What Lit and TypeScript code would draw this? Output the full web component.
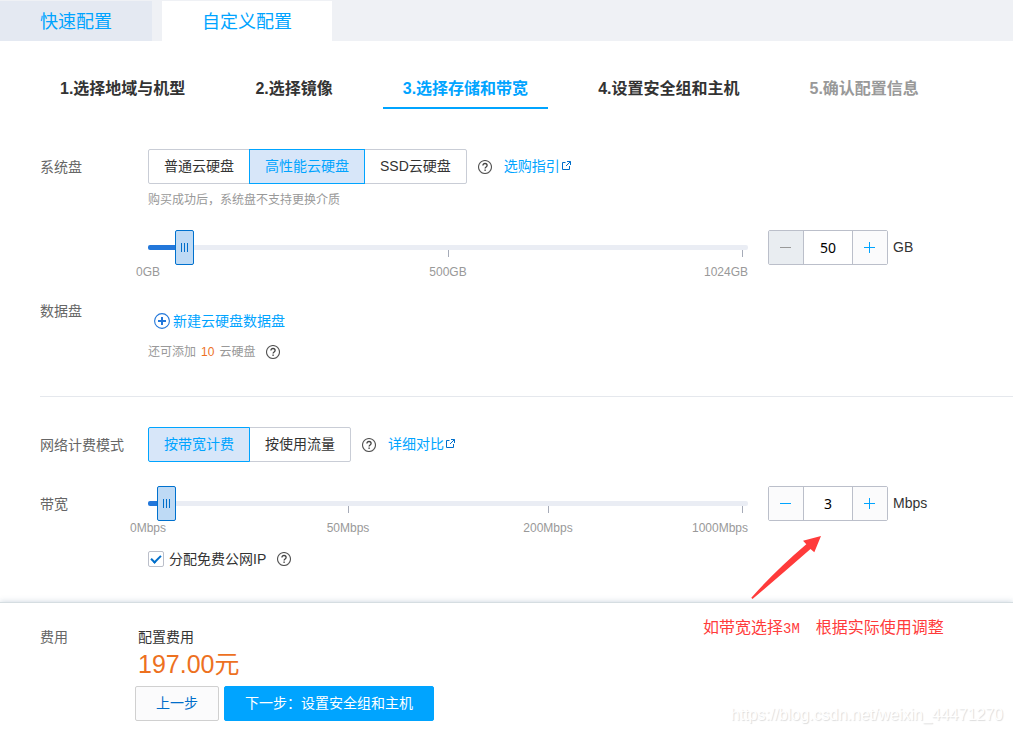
import { LitElement, html, css, svg, nothing } from "lit";
import { customElement, property, state } from "lit/decorators.js";
import { classMap } from "lit/directives/class-map.js";
import { styleMap } from "lit/directives/style-map.js";

const helpIcon = html`<svg class="help" viewBox="0 0 14 14" width="14" height="14" role="img" aria-label="帮助">
  <circle cx="7" cy="7" r="6.5" fill="none" stroke="#555" stroke-width="1.1" />
  <path d="M4.9 5.6C4.9 4.3 5.8 3.5 7 3.5s2.1.8 2.1 1.9c0 1.5-2 1.5-2 3.1" fill="none" stroke="#444" stroke-width="1.3" />
  <rect x="6.4" y="9.5" width="1.4" height="1.4" fill="#444" />
</svg>`;

const externalIcon = html`<svg class="external" viewBox="0 0 9 9" width="9" height="9" aria-hidden="true">
  <path d="M3.5 1.5H.5v7h7V5M5 .5h3.5V4M8.5.5L4 5" fill="none" stroke="#006eca" stroke-width="1" />
</svg>`;

/** Row of mutually exclusive options. */
@customElement("option-group")
export class OptionGroup extends LitElement {
  @property({ attribute: false }) options: string[] = [];
  @property({ type: Number }) selected = 0;
  @property() label = "";

  static styles = css`
    :host { display: inline-flex; }
    .group { display: flex; }
    .option {
      box-sizing: border-box;
      height: 35px;
      padding: 0 15px;
      border: 1px solid #c9cdd6;
      background: #fff;
      color: #333;
      font: inherit;
      line-height: 33px;
      white-space: nowrap;
      cursor: pointer;
    }
    .option + .option { margin-left: -1px; }
    .option:first-child { border-radius: 2px 0 0 2px; }
    .option:last-child { border-radius: 0 2px 2px 0; }
    .active {
      z-index: 1;
      border-color: #00a4ff;
      background: #d7e6f9;
      color: #00a4ff;
    }
  `;

  render() {
    return html`<div class="group" role="group" aria-label=${this.label}>
      ${this.options.map(
        (text, i) => html`<button
          type="button"
          class=${classMap({ option: true, active: i === this.selected })}
          aria-pressed=${i === this.selected}
          @click=${() => (this.selected = i)}
        >${text}</button>`
      )}
    </div>`;
  }
}

/** Slider with scale marks, paired with a minus / value / plus stepper. */
@customElement("amount-slider")
export class AmountSlider extends LitElement {
  @property({ attribute: false }) marks: string[] = [];
  @property({ type: Number }) position = 0;
  @property({ type: Number }) amount = 0;
  @property({ type: Number }) min = 0;
  @property() unit = "";
  @property() label = "";

  static styles = css`
    :host { display: flex; align-items: flex-start; }
    .slider { flex: 0 1 600px; min-width: 0; }
    .range {
      appearance: none;
      display: block;
      width: 100%;
      height: 35px;
      margin: 0;
      background: none;
      cursor: pointer;
    }
    .range::-webkit-slider-runnable-track {
      height: 5px;
      border-radius: 2px;
      background: linear-gradient(to right, #2277da var(--fill), #eaedf4 var(--fill));
    }
    .range::-webkit-slider-thumb {
      appearance: none;
      box-sizing: border-box;
      width: 19px;
      height: 35px;
      margin-top: -15px;
      border: 1px solid #0071ce;
      border-radius: 2px;
      background:
        linear-gradient(#006eca, #006eca) 5px 12px / 1px 9px no-repeat,
        linear-gradient(#006eca, #006eca) 8px 12px / 1px 9px no-repeat,
        linear-gradient(#006eca, #006eca) 11px 12px / 1px 9px no-repeat,
        #bedaf5;
    }
    .marks {
      display: flex;
      justify-content: space-between;
      margin-top: -15px;
      color: #999;
      font-size: 12px;
      line-height: 16px;
    }
    .mark {
      display: flex;
      flex-direction: column;
      align-items: center;
      gap: 7px;
      width: 0;
      white-space: nowrap;
    }
    .tick { width: 1px; height: 7px; background: #a6abb8; }
    .mark:first-child .tick { visibility: hidden; }
    .mark:last-child { align-items: flex-end; }
    .mark:last-child .tick { margin-right: 5px; }
    .stepper {
      display: flex;
      flex: none;
      box-sizing: border-box;
      width: 120px;
      height: 35px;
      margin: 0 5px 0 20px;
      border: 1px solid #bbbfca;
      border-radius: 2px;
    }
    .step {
      display: grid;
      place-items: center;
      box-sizing: border-box;
      width: 34px;
      padding: 0 1px 0 0;
      border: 0;
      background: #fbfbfc;
      color: #00a4ff;
      cursor: pointer;
    }
    .step:disabled { background: #e9edf1; color: #999; }
    .value {
      flex: 1;
      box-sizing: border-box;
      min-width: 0;
      padding: 0;
      border: 1px solid #bbbfca;
      border-width: 0 1px;
      background: #fff;
      color: #000;
      font: 14px "Noto Sans", sans-serif;
      text-align: center;
    }
    .unit { color: #333; line-height: 34px; }
  `;

  private sign(plus: boolean) {
    return html`<svg viewBox="0 0 11 11" width="11" height="11" aria-hidden="true">
      <path d="M0 5.5h11" stroke="currentColor" />
      ${plus ? svg`<path d="M5.5 0v11" stroke="currentColor" />` : nothing}
    </svg>`;
  }

  render() {
    return html`
      <div class="slider">
        <input
          class="range"
          type="range"
          min="0"
          max="581"
          aria-label=${this.label}
          aria-valuetext=${this.amount + this.unit}
          .value=${String(this.position)}
          style=${styleMap({ "--fill": `${(this.position + 9) / 6}%` })}
          @input=${(e: Event) => (this.position = Number((e.target as HTMLInputElement).value))}
        />
        <div class="marks">
          ${this.marks.map((m) => html`<div class="mark"><i class="tick"></i><span>${m}</span></div>`)}
        </div>
      </div>
      <div class="stepper">
        <button class="step" type="button" aria-label="减少" ?disabled=${this.amount <= this.min}
          @click=${() => this.amount--}>${this.sign(false)}</button>
        <input class="value" type="text" aria-label=${this.label} .value=${String(this.amount)} />
        <button class="step" type="button" aria-label="增加"
          @click=${() => this.amount++}>${this.sign(true)}</button>
      </div>
      <span class="unit">${this.unit}</span>
    `;
  }
}

@customElement("app-root")
export class AppRoot extends LitElement {
  @state() private freeIp = true;

  private steps = ["选择地域与机型", "选择镜像", "选择存储和带宽", "设置安全组和主机", "确认配置信息"];

  static styles = css`
    :host {
      display: block;
      position: relative;
      overflow: hidden;
      min-height: 100vh;
      background: #fff;
      color: #333;
      font: 14px/20px "Liberation Sans", "Noto Sans CJK SC", sans-serif;
    }
    .tabs {
      display: flex;
      gap: 10px;
      padding-top: 1px;
      background: #eff1f5;
    }
    .tab {
      height: 40px;
      padding: 2px 40px 0;
      border: 0;
      background: #e4e9f2;
      color: #00a4ff;
      font: inherit;
      font-size: 18px;
      cursor: pointer;
    }
    .tab.current { background: #fff; }
    .steps {
      display: flex;
      gap: 30px;
      margin: 29px 0 40px;
      padding: 0 0 0 40px;
      list-style: none;
      font-size: 16px;
      font-weight: bold;
      line-height: 37px;
      white-space: nowrap;
    }
    .stage { padding: 0 20px; border-bottom: 2px solid transparent; }
    .stage.current { border-color: #00a4ff; color: #00a4ff; }
    .stage.pending { color: #999; }
    .row {
      display: grid;
      grid-template-columns: 108px minmax(0, 1fr);
      padding-left: 40px;
    }
    .name { color: #666; }
    .tall { height: 35px; line-height: 36px; }
    .line { display: flex; align-items: center; }
    .help { display: block; flex: none; margin: 0 12px 0 11px; }
    .link {
      display: flex;
      align-items: center;
      gap: 2px;
      color: #00a4ff;
      line-height: 33px;
      text-decoration: none;
    }
    .external { margin-bottom: 2px; }
    .hint {
      display: flex;
      align-items: center;
      color: #999;
      font-size: 12px;
      line-height: 18px;
    }
    .after-options { margin: 7px 0 21px; }
    .count { margin: 0 5px; color: #ed711f; }
    .data-disk { margin-top: 21px; }
    .add {
      display: flex;
      align-items: center;
      gap: 3px;
      margin: 10px 0 12px;
      padding: 0 6px;
      border: 0;
      background: none;
      color: #00a4ff;
      font: inherit;
      cursor: pointer;
    }
    .divider {
      height: 1px;
      margin: 35px 0 30px 40px;
      border: 0;
      background: #e5e8ed;
    }
    .bandwidth { margin-top: 24px; }
    .ip { height: 16px; margin-top: 15px; }
    .check-label { display: flex; align-items: center; gap: 5px; }
    .check {
      appearance: none;
      box-sizing: border-box;
      width: 16px;
      height: 16px;
      margin: 0;
      border: 1px solid #bbbfca;
      border-radius: 2px;
      background: #fff;
      display: grid;
      place-items: center;
    }
    .check:checked::before {
      content: "";
      width: 8px;
      height: 4px;
      margin-bottom: 3px;
      border: solid #006eca;
      border-width: 0 0 2px 2px;
      transform: rotate(-45deg);
    }
    .footer {
      display: grid;
      grid-template-columns: 95px minmax(0, 1fr);
      margin-top: 35px;
      padding: 24px 0 12px 40px;
      border-top: 1px solid #d5dde1;
      box-shadow: 0 0 6px rgba(40, 80, 120, 0.25);
      background: #fff;
    }
    .cost { padding-left: 3px; }
    .price {
      margin: 2px 0 7px;
      color: #ed711f;
      font-size: 25px;
      line-height: 30px;
    }
    .actions { display: flex; gap: 5px; }
    .action {
      box-sizing: border-box;
      height: 35px;
      padding: 0 20px 2px;
      border: 1px solid #d0d0d0;
      border-radius: 2px;
      background: #fbfbfc;
      color: #006eca;
      font: inherit;
      cursor: pointer;
    }
    .primary { border-color: #00a4ff; background: #00a4ff; color: #fff; }
    .arrow { position: absolute; left: 748px; top: 532px; pointer-events: none; }
    .note {
      position: absolute;
      left: 703px;
      top: 618px;
      color: #ff3b3b;
      font-size: 16px;
      white-space: nowrap;
    }
    .mono { font-family: "Liberation Mono", monospace; font-size: 14px; }
    .watermark {
      position: absolute;
      right: 10px;
      bottom: 8px;
      color: #fff;
      font-size: 16px;
      text-shadow: 1px 1px 1px #dcdcdc;
      pointer-events: none;
    }
  `;

  render() {
    return html`
      <nav class="tabs" aria-label="配置方式">
        <button class="tab" type="button">快速配置</button>
        <button class="tab current" type="button" aria-current="page">自定义配置</button>
      </nav>

      <ol class="steps">
        ${this.steps.map(
          (s, i) => html`<li class=${classMap({ stage: true, current: i === 2, pending: i === 4 })}>${i + 1}.${s}</li>`
        )}
      </ol>

      <section class="row">
        <span class="name tall">系统盘</span>
        <div>
          <div class="line">
            <option-group label="系统盘" .options=${["普通云硬盘", "高性能云硬盘", "SSD云硬盘"]} .selected=${1}></option-group>
            ${helpIcon}
            <a class="link" href="#guide">选购指引${externalIcon}</a>
          </div>
          <div class="hint after-options">购买成功后，系统盘不支持更换介质</div>
          <amount-slider label="系统盘容量" unit="GB" .marks=${["0GB", "500GB", "1024GB"]}
            .position=${27} .amount=${50} .min=${50}></amount-slider>
        </div>
      </section>

      <section class="row data-disk">
        <span class="name">数据盘</span>
        <div>
          <button class="add" type="button">
            <svg viewBox="0 0 16 16" width="16" height="16" aria-hidden="true">
              <circle cx="8" cy="8" r="7.4" fill="none" stroke="#2277da" stroke-width="1.1" />
              <path d="M4 8h8M8 4v8" stroke="#2277da" stroke-width="2" />
            </svg>
            新建云硬盘数据盘
          </button>
          <div class="hint"><span>还可添加<span class="count">10</span>云硬盘</span>${helpIcon}</div>
        </div>
      </section>

      <hr class="divider" />

      <section class="row">
        <span class="name tall">网络计费模式</span>
        <div class="line">
          <option-group label="网络计费模式" .options=${["按带宽计费", "按使用流量"]} .selected=${0}></option-group>
          ${helpIcon}
          <a class="link" href="#compare">详细对比${externalIcon}</a>
        </div>
      </section>

      <section class="row bandwidth">
        <span class="name tall">带宽</span>
        <div>
          <amount-slider label="带宽" unit="Mbps" .marks=${["0Mbps", "50Mbps", "200Mbps", "1000Mbps"]}
            .position=${9} .amount=${3} .min=${0}></amount-slider>
          <div class="line ip">
            <label class="check-label">
              <input class="check" type="checkbox" .checked=${this.freeIp}
                @change=${(e: Event) => (this.freeIp = (e.target as HTMLInputElement).checked)} />
              分配免费公网IP
            </label>
            ${helpIcon}
          </div>
        </div>
      </section>

      <footer class="footer">
        <span class="name">费用</span>
        <div>
          <div class="cost">
            <div>配置费用</div>
            <div class="price">197.00元</div>
          </div>
          <div class="actions">
            <button class="action" type="button">上一步</button>
            <button class="action primary" type="button">下一步：设置安全组和主机</button>
          </div>
        </div>
      </footer>

      <svg class="arrow" viewBox="748 532 76 70" width="76" height="70" aria-hidden="true">
        <path d="M821 536L803 540.7 806.3 544.3Q775 571 751.3 597.8L752.5 599Q782 574 810.5 549L814.3 552.3Z" fill="#ff3b3b" />
      </svg>
      <div class="note">如带宽选择<span class="mono">3M</span>　根据实际使用调整</div>
      <div class="watermark">https://blog.csdn.net/weixin_44471270</div>
    `;
  }
}
